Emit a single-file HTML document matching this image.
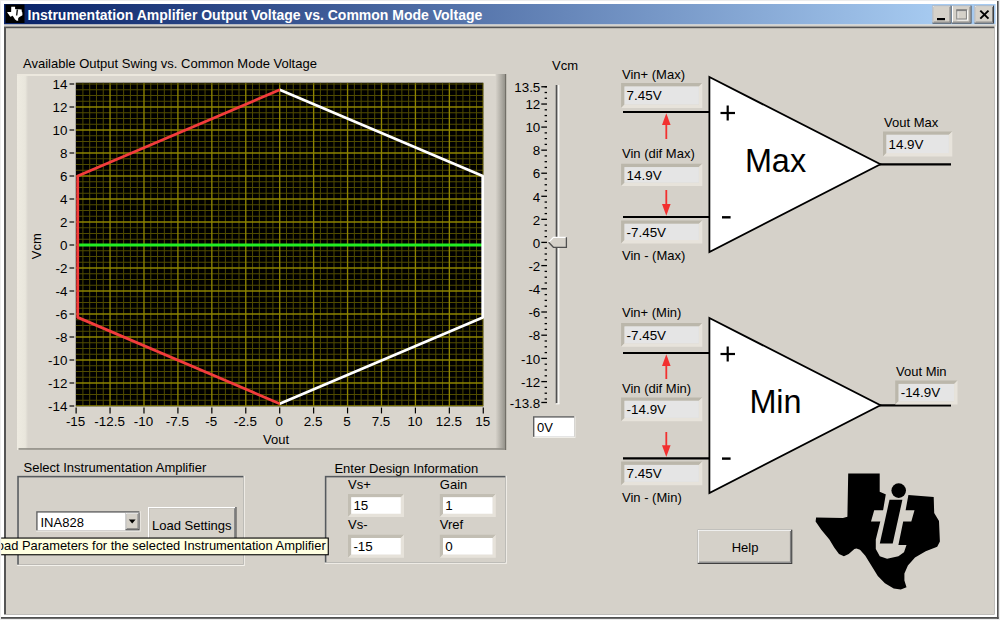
<!DOCTYPE html>
<html><head><meta charset="utf-8"><title>Instrumentation Amplifier Output Voltage vs. Common Mode Voltage</title>
<style>
html,body{margin:0;padding:0;width:1000px;height:620px;overflow:hidden;background:#ececec}
svg{display:block;font-family:'Liberation Sans', Arial, sans-serif}
</style></head><body>
<svg width="1000" height="620" viewBox="0 0 1000 620" font-family="Liberation Sans, Arial, sans-serif">
<rect x="0" y="0" width="1000" height="620" fill="#ececec" />
<rect x="1" y="1" width="996" height="616" fill="#ffffff" />
<rect x="997" y="1" width="1.6" height="618" fill="#505050" />
<rect x="1" y="617" width="997.6" height="1.8" fill="#505050" />
<defs><linearGradient id="tg" gradientUnits="userSpaceOnUse" x1="24" x2="935" y1="0" y2="0"><stop offset="0" stop-color="#0a246a"/><stop offset="1" stop-color="#a6caf0"/></linearGradient><linearGradient id="pr" x1="0" x2="1" y1="0" y2="0"><stop offset="0" stop-color="#d8d4cc"/><stop offset="1" stop-color="#8e8c84"/></linearGradient><linearGradient id="pl" x1="0" x2="1" y1="0" y2="0"><stop offset="0" stop-color="#eeebe1"/><stop offset="0.75" stop-color="#e9e6dc"/><stop offset="1" stop-color="#d9d5cd"/></linearGradient></defs>
<rect x="4" y="4" width="991.6" height="20.5" fill="url(#tg)" />
<rect x="4" y="24.5" width="991.6" height="2" fill="#d5d1c9" />
<rect x="4" y="26.5" width="990.5" height="588" fill="#555555" />
<rect x="6" y="28.2" width="988.5" height="586.3" fill="#d5d1c9" />
<rect x="5.5" y="4.5" width="19" height="18.5" fill="#000" />
<g transform="translate(7.2,6.6) scale(0.122) translate(-815,-473)">
<polygon fill="#fff" points="848.2,473.5 879.7,473.5 879.7,491.8 885.5,494.2 908.3,495.0 933.7,497.1 934.2,513.1 939,521 939.9,541.5 937.2,546.8 925.7,551.2 915,557.5 907.9,565.4 904.4,573.4 904.4,580.5 906.5,587.3 900.8,589.4 893.7,588.5 884.9,583.2 877.8,576.1 870.7,564.6 865.3,555.7 860,549.8 856.5,548.5 854.4,549 848.7,553.9 843.9,556.3 839,553.9 834.2,547.4 829.4,539.4 821.3,529.7 815.6,521.6 816.1,517.6 843,517.9 847.4,516.8"/>
<polygon fill="#222" points="892,497 905,497 898,545 886,545"/>
</g>
<text x="27.5" y="19.8" font-size="14" font-weight="bold" fill="#fff" text-anchor="start" >Instrumentation Amplifier Output Voltage vs. Common Mode Voltage</text>
<rect x="932.5" y="5.6" width="19" height="18" fill="#404040" />
<rect x="932.5" y="5.6" width="18" height="17" fill="#ffffff" />
<rect x="933.5" y="6.6" width="17" height="16" fill="#808080" />
<rect x="933.5" y="6.6" width="16" height="15" fill="#d5d1c9" />
<rect x="952" y="5.6" width="19.5" height="18" fill="#404040" />
<rect x="952" y="5.6" width="18.5" height="17" fill="#ffffff" />
<rect x="953" y="6.6" width="17.5" height="16" fill="#808080" />
<rect x="953" y="6.6" width="16.5" height="15" fill="#d5d1c9" />
<rect x="974.5" y="5.6" width="19.5" height="18" fill="#404040" />
<rect x="974.5" y="5.6" width="18.5" height="17" fill="#ffffff" />
<rect x="975.5" y="6.6" width="17.5" height="16" fill="#808080" />
<rect x="975.5" y="6.6" width="16.5" height="15" fill="#d5d1c9" />
<rect x="937" y="18" width="8" height="2.2" fill="#000" />
<rect x="957.8" y="10.8" width="9.6" height="9.2" fill="none" stroke="#fff" stroke-width="1"/>
<rect x="956.8" y="9.8" width="9.6" height="9.2" fill="none" stroke="#808080" stroke-width="1"/>
<line x1="956.4" y1="10.4" x2="966.8" y2="10.4" stroke="#808080" stroke-width="1.6" />
<line x1="980.3" y1="10.6" x2="988.5" y2="18.6" stroke="#000" stroke-width="2" />
<line x1="988.5" y1="10.6" x2="980.3" y2="18.6" stroke="#000" stroke-width="2" />
<rect x="17" y="74" width="489" height="376" fill="#d9d5cd" />
<rect x="17" y="74" width="11" height="376" fill="url(#pl)" />
<rect x="17" y="74" width="489" height="2" fill="#ece8de" />
<rect x="495.5" y="74" width="10.5" height="376" fill="url(#pr)" />
<rect x="18.5" y="448.1" width="487.5" height="1.7" fill="#94928a" />
<rect x="505.2" y="74" width="1" height="376" fill="#6a6860" />
<text x="23" y="67.6" font-size="13" font-weight="normal" fill="#000" text-anchor="start" >Available Output Swing vs. Common Mode Voltage</text>
<rect x="75.8" y="82.7" width="407.5" height="323.6" fill="#000" />
<clipPath id="pc"><rect x="75.8" y="82.7" width="407.5" height="323.6"/></clipPath>
<g clip-path="url(#pc)">
<line x1="82.91" y1="82.7" x2="82.91" y2="406.3" stroke="#504b00" stroke-width="1.0" />
<line x1="89.69" y1="82.7" x2="89.69" y2="406.3" stroke="#504b00" stroke-width="1.0" />
<line x1="96.48" y1="82.7" x2="96.48" y2="406.3" stroke="#504b00" stroke-width="1.0" />
<line x1="103.26" y1="82.7" x2="103.26" y2="406.3" stroke="#504b00" stroke-width="1.0" />
<line x1="116.84" y1="82.7" x2="116.84" y2="406.3" stroke="#504b00" stroke-width="1.0" />
<line x1="123.62" y1="82.7" x2="123.62" y2="406.3" stroke="#504b00" stroke-width="1.0" />
<line x1="130.41" y1="82.7" x2="130.41" y2="406.3" stroke="#504b00" stroke-width="1.0" />
<line x1="137.19" y1="82.7" x2="137.19" y2="406.3" stroke="#504b00" stroke-width="1.0" />
<line x1="150.77" y1="82.7" x2="150.77" y2="406.3" stroke="#504b00" stroke-width="1.0" />
<line x1="157.55" y1="82.7" x2="157.55" y2="406.3" stroke="#504b00" stroke-width="1.0" />
<line x1="164.34" y1="82.7" x2="164.34" y2="406.3" stroke="#504b00" stroke-width="1.0" />
<line x1="171.12" y1="82.7" x2="171.12" y2="406.3" stroke="#504b00" stroke-width="1.0" />
<line x1="184.70" y1="82.7" x2="184.70" y2="406.3" stroke="#504b00" stroke-width="1.0" />
<line x1="191.48" y1="82.7" x2="191.48" y2="406.3" stroke="#504b00" stroke-width="1.0" />
<line x1="198.27" y1="82.7" x2="198.27" y2="406.3" stroke="#504b00" stroke-width="1.0" />
<line x1="205.05" y1="82.7" x2="205.05" y2="406.3" stroke="#504b00" stroke-width="1.0" />
<line x1="218.63" y1="82.7" x2="218.63" y2="406.3" stroke="#504b00" stroke-width="1.0" />
<line x1="225.41" y1="82.7" x2="225.41" y2="406.3" stroke="#504b00" stroke-width="1.0" />
<line x1="232.20" y1="82.7" x2="232.20" y2="406.3" stroke="#504b00" stroke-width="1.0" />
<line x1="238.98" y1="82.7" x2="238.98" y2="406.3" stroke="#504b00" stroke-width="1.0" />
<line x1="252.56" y1="82.7" x2="252.56" y2="406.3" stroke="#504b00" stroke-width="1.0" />
<line x1="259.34" y1="82.7" x2="259.34" y2="406.3" stroke="#504b00" stroke-width="1.0" />
<line x1="266.13" y1="82.7" x2="266.13" y2="406.3" stroke="#504b00" stroke-width="1.0" />
<line x1="272.91" y1="82.7" x2="272.91" y2="406.3" stroke="#504b00" stroke-width="1.0" />
<line x1="286.49" y1="82.7" x2="286.49" y2="406.3" stroke="#504b00" stroke-width="1.0" />
<line x1="293.27" y1="82.7" x2="293.27" y2="406.3" stroke="#504b00" stroke-width="1.0" />
<line x1="300.06" y1="82.7" x2="300.06" y2="406.3" stroke="#504b00" stroke-width="1.0" />
<line x1="306.84" y1="82.7" x2="306.84" y2="406.3" stroke="#504b00" stroke-width="1.0" />
<line x1="320.42" y1="82.7" x2="320.42" y2="406.3" stroke="#504b00" stroke-width="1.0" />
<line x1="327.20" y1="82.7" x2="327.20" y2="406.3" stroke="#504b00" stroke-width="1.0" />
<line x1="333.99" y1="82.7" x2="333.99" y2="406.3" stroke="#504b00" stroke-width="1.0" />
<line x1="340.77" y1="82.7" x2="340.77" y2="406.3" stroke="#504b00" stroke-width="1.0" />
<line x1="354.35" y1="82.7" x2="354.35" y2="406.3" stroke="#504b00" stroke-width="1.0" />
<line x1="361.13" y1="82.7" x2="361.13" y2="406.3" stroke="#504b00" stroke-width="1.0" />
<line x1="367.92" y1="82.7" x2="367.92" y2="406.3" stroke="#504b00" stroke-width="1.0" />
<line x1="374.70" y1="82.7" x2="374.70" y2="406.3" stroke="#504b00" stroke-width="1.0" />
<line x1="388.28" y1="82.7" x2="388.28" y2="406.3" stroke="#504b00" stroke-width="1.0" />
<line x1="395.06" y1="82.7" x2="395.06" y2="406.3" stroke="#504b00" stroke-width="1.0" />
<line x1="401.85" y1="82.7" x2="401.85" y2="406.3" stroke="#504b00" stroke-width="1.0" />
<line x1="408.63" y1="82.7" x2="408.63" y2="406.3" stroke="#504b00" stroke-width="1.0" />
<line x1="422.21" y1="82.7" x2="422.21" y2="406.3" stroke="#504b00" stroke-width="1.0" />
<line x1="428.99" y1="82.7" x2="428.99" y2="406.3" stroke="#504b00" stroke-width="1.0" />
<line x1="435.78" y1="82.7" x2="435.78" y2="406.3" stroke="#504b00" stroke-width="1.0" />
<line x1="442.56" y1="82.7" x2="442.56" y2="406.3" stroke="#504b00" stroke-width="1.0" />
<line x1="456.14" y1="82.7" x2="456.14" y2="406.3" stroke="#504b00" stroke-width="1.0" />
<line x1="462.92" y1="82.7" x2="462.92" y2="406.3" stroke="#504b00" stroke-width="1.0" />
<line x1="469.71" y1="82.7" x2="469.71" y2="406.3" stroke="#504b00" stroke-width="1.0" />
<line x1="476.49" y1="82.7" x2="476.49" y2="406.3" stroke="#504b00" stroke-width="1.0" />
<line x1="75.8" y1="400.25" x2="483.3" y2="400.25" stroke="#504b00" stroke-width="1.0" />
<line x1="75.8" y1="394.50" x2="483.3" y2="394.50" stroke="#504b00" stroke-width="1.0" />
<line x1="75.8" y1="388.75" x2="483.3" y2="388.75" stroke="#504b00" stroke-width="1.0" />
<line x1="75.8" y1="377.25" x2="483.3" y2="377.25" stroke="#504b00" stroke-width="1.0" />
<line x1="75.8" y1="371.50" x2="483.3" y2="371.50" stroke="#504b00" stroke-width="1.0" />
<line x1="75.8" y1="365.75" x2="483.3" y2="365.75" stroke="#504b00" stroke-width="1.0" />
<line x1="75.8" y1="354.25" x2="483.3" y2="354.25" stroke="#504b00" stroke-width="1.0" />
<line x1="75.8" y1="348.50" x2="483.3" y2="348.50" stroke="#504b00" stroke-width="1.0" />
<line x1="75.8" y1="342.75" x2="483.3" y2="342.75" stroke="#504b00" stroke-width="1.0" />
<line x1="75.8" y1="331.25" x2="483.3" y2="331.25" stroke="#504b00" stroke-width="1.0" />
<line x1="75.8" y1="325.50" x2="483.3" y2="325.50" stroke="#504b00" stroke-width="1.0" />
<line x1="75.8" y1="319.75" x2="483.3" y2="319.75" stroke="#504b00" stroke-width="1.0" />
<line x1="75.8" y1="308.25" x2="483.3" y2="308.25" stroke="#504b00" stroke-width="1.0" />
<line x1="75.8" y1="302.50" x2="483.3" y2="302.50" stroke="#504b00" stroke-width="1.0" />
<line x1="75.8" y1="296.75" x2="483.3" y2="296.75" stroke="#504b00" stroke-width="1.0" />
<line x1="75.8" y1="285.25" x2="483.3" y2="285.25" stroke="#504b00" stroke-width="1.0" />
<line x1="75.8" y1="279.50" x2="483.3" y2="279.50" stroke="#504b00" stroke-width="1.0" />
<line x1="75.8" y1="273.75" x2="483.3" y2="273.75" stroke="#504b00" stroke-width="1.0" />
<line x1="75.8" y1="262.25" x2="483.3" y2="262.25" stroke="#504b00" stroke-width="1.0" />
<line x1="75.8" y1="256.50" x2="483.3" y2="256.50" stroke="#504b00" stroke-width="1.0" />
<line x1="75.8" y1="250.75" x2="483.3" y2="250.75" stroke="#504b00" stroke-width="1.0" />
<line x1="75.8" y1="239.25" x2="483.3" y2="239.25" stroke="#504b00" stroke-width="1.0" />
<line x1="75.8" y1="233.50" x2="483.3" y2="233.50" stroke="#504b00" stroke-width="1.0" />
<line x1="75.8" y1="227.75" x2="483.3" y2="227.75" stroke="#504b00" stroke-width="1.0" />
<line x1="75.8" y1="216.25" x2="483.3" y2="216.25" stroke="#504b00" stroke-width="1.0" />
<line x1="75.8" y1="210.50" x2="483.3" y2="210.50" stroke="#504b00" stroke-width="1.0" />
<line x1="75.8" y1="204.75" x2="483.3" y2="204.75" stroke="#504b00" stroke-width="1.0" />
<line x1="75.8" y1="193.25" x2="483.3" y2="193.25" stroke="#504b00" stroke-width="1.0" />
<line x1="75.8" y1="187.50" x2="483.3" y2="187.50" stroke="#504b00" stroke-width="1.0" />
<line x1="75.8" y1="181.75" x2="483.3" y2="181.75" stroke="#504b00" stroke-width="1.0" />
<line x1="75.8" y1="170.25" x2="483.3" y2="170.25" stroke="#504b00" stroke-width="1.0" />
<line x1="75.8" y1="164.50" x2="483.3" y2="164.50" stroke="#504b00" stroke-width="1.0" />
<line x1="75.8" y1="158.75" x2="483.3" y2="158.75" stroke="#504b00" stroke-width="1.0" />
<line x1="75.8" y1="147.25" x2="483.3" y2="147.25" stroke="#504b00" stroke-width="1.0" />
<line x1="75.8" y1="141.50" x2="483.3" y2="141.50" stroke="#504b00" stroke-width="1.0" />
<line x1="75.8" y1="135.75" x2="483.3" y2="135.75" stroke="#504b00" stroke-width="1.0" />
<line x1="75.8" y1="124.25" x2="483.3" y2="124.25" stroke="#504b00" stroke-width="1.0" />
<line x1="75.8" y1="118.50" x2="483.3" y2="118.50" stroke="#504b00" stroke-width="1.0" />
<line x1="75.8" y1="112.75" x2="483.3" y2="112.75" stroke="#504b00" stroke-width="1.0" />
<line x1="75.8" y1="101.25" x2="483.3" y2="101.25" stroke="#504b00" stroke-width="1.0" />
<line x1="75.8" y1="95.50" x2="483.3" y2="95.50" stroke="#504b00" stroke-width="1.0" />
<line x1="75.8" y1="89.75" x2="483.3" y2="89.75" stroke="#504b00" stroke-width="1.0" />
<line x1="110.05" y1="82.7" x2="110.05" y2="406.3" stroke="#8e8400" stroke-width="1.35" />
<line x1="143.98" y1="82.7" x2="143.98" y2="406.3" stroke="#8e8400" stroke-width="1.35" />
<line x1="177.91" y1="82.7" x2="177.91" y2="406.3" stroke="#8e8400" stroke-width="1.35" />
<line x1="211.84" y1="82.7" x2="211.84" y2="406.3" stroke="#8e8400" stroke-width="1.35" />
<line x1="245.77" y1="82.7" x2="245.77" y2="406.3" stroke="#8e8400" stroke-width="1.35" />
<line x1="279.70" y1="82.7" x2="279.70" y2="406.3" stroke="#8e8400" stroke-width="1.35" />
<line x1="313.63" y1="82.7" x2="313.63" y2="406.3" stroke="#8e8400" stroke-width="1.35" />
<line x1="347.56" y1="82.7" x2="347.56" y2="406.3" stroke="#8e8400" stroke-width="1.35" />
<line x1="381.49" y1="82.7" x2="381.49" y2="406.3" stroke="#8e8400" stroke-width="1.35" />
<line x1="415.42" y1="82.7" x2="415.42" y2="406.3" stroke="#8e8400" stroke-width="1.35" />
<line x1="449.35" y1="82.7" x2="449.35" y2="406.3" stroke="#8e8400" stroke-width="1.35" />
<line x1="483.28" y1="82.7" x2="483.28" y2="406.3" stroke="#8e8400" stroke-width="1.35" />
<line x1="75.8" y1="84.00" x2="483.3" y2="84.00" stroke="#504b00" stroke-width="1.0" />
<line x1="75.8" y1="406.00" x2="483.3" y2="406.00" stroke="#8e8400" stroke-width="1.35" />
<line x1="75.8" y1="383.00" x2="483.3" y2="383.00" stroke="#8e8400" stroke-width="1.35" />
<line x1="75.8" y1="360.00" x2="483.3" y2="360.00" stroke="#8e8400" stroke-width="1.35" />
<line x1="75.8" y1="337.00" x2="483.3" y2="337.00" stroke="#8e8400" stroke-width="1.35" />
<line x1="75.8" y1="314.00" x2="483.3" y2="314.00" stroke="#8e8400" stroke-width="1.35" />
<line x1="75.8" y1="291.00" x2="483.3" y2="291.00" stroke="#8e8400" stroke-width="1.35" />
<line x1="75.8" y1="268.00" x2="483.3" y2="268.00" stroke="#8e8400" stroke-width="1.35" />
<line x1="75.8" y1="245.00" x2="483.3" y2="245.00" stroke="#8e8400" stroke-width="1.35" />
<line x1="75.8" y1="222.00" x2="483.3" y2="222.00" stroke="#8e8400" stroke-width="1.35" />
<line x1="75.8" y1="199.00" x2="483.3" y2="199.00" stroke="#8e8400" stroke-width="1.35" />
<line x1="75.8" y1="176.00" x2="483.3" y2="176.00" stroke="#8e8400" stroke-width="1.35" />
<line x1="75.8" y1="153.00" x2="483.3" y2="153.00" stroke="#8e8400" stroke-width="1.35" />
<line x1="75.8" y1="130.00" x2="483.3" y2="130.00" stroke="#8e8400" stroke-width="1.35" />
<line x1="75.8" y1="107.00" x2="483.3" y2="107.00" stroke="#8e8400" stroke-width="1.35" />
</g>
<polyline fill="none" stroke="#22ee22" stroke-width="3" points="77.6,245.0 483.3,245.0"/>
<polyline fill="none" stroke="#ffffff" stroke-width="2.7" stroke-linejoin="round" points="279.7,89.8 482.7,176.0 482.7,317.4 279.7,403.7"/>
<polyline fill="none" stroke="#f23c3c" stroke-width="2.8" stroke-linejoin="round" points="279.7,89.8 77.7,176.0 77.7,317.4 279.7,403.7"/>
<line x1="69.5" y1="406.00" x2="74.2" y2="406.00" stroke="#000" stroke-width="1.15" />
<text x="67.4" y="411.1" font-size="13.4" font-weight="normal" fill="#000" text-anchor="end" >-14</text>
<line x1="69.5" y1="383.00" x2="74.2" y2="383.00" stroke="#000" stroke-width="1.15" />
<text x="67.4" y="388.1" font-size="13.4" font-weight="normal" fill="#000" text-anchor="end" >-12</text>
<line x1="69.5" y1="360.00" x2="74.2" y2="360.00" stroke="#000" stroke-width="1.15" />
<text x="67.4" y="365.1" font-size="13.4" font-weight="normal" fill="#000" text-anchor="end" >-10</text>
<line x1="69.5" y1="337.00" x2="74.2" y2="337.00" stroke="#000" stroke-width="1.15" />
<text x="67.4" y="342.1" font-size="13.4" font-weight="normal" fill="#000" text-anchor="end" >-8</text>
<line x1="69.5" y1="314.00" x2="74.2" y2="314.00" stroke="#000" stroke-width="1.15" />
<text x="67.4" y="319.1" font-size="13.4" font-weight="normal" fill="#000" text-anchor="end" >-6</text>
<line x1="69.5" y1="291.00" x2="74.2" y2="291.00" stroke="#000" stroke-width="1.15" />
<text x="67.4" y="296.1" font-size="13.4" font-weight="normal" fill="#000" text-anchor="end" >-4</text>
<line x1="69.5" y1="268.00" x2="74.2" y2="268.00" stroke="#000" stroke-width="1.15" />
<text x="67.4" y="273.1" font-size="13.4" font-weight="normal" fill="#000" text-anchor="end" >-2</text>
<line x1="69.5" y1="245.00" x2="74.2" y2="245.00" stroke="#000" stroke-width="1.15" />
<text x="67.4" y="250.1" font-size="13.4" font-weight="normal" fill="#000" text-anchor="end" >0</text>
<line x1="69.5" y1="222.00" x2="74.2" y2="222.00" stroke="#000" stroke-width="1.15" />
<text x="67.4" y="227.1" font-size="13.4" font-weight="normal" fill="#000" text-anchor="end" >2</text>
<line x1="69.5" y1="199.00" x2="74.2" y2="199.00" stroke="#000" stroke-width="1.15" />
<text x="67.4" y="204.1" font-size="13.4" font-weight="normal" fill="#000" text-anchor="end" >4</text>
<line x1="69.5" y1="176.00" x2="74.2" y2="176.00" stroke="#000" stroke-width="1.15" />
<text x="67.4" y="181.1" font-size="13.4" font-weight="normal" fill="#000" text-anchor="end" >6</text>
<line x1="69.5" y1="153.00" x2="74.2" y2="153.00" stroke="#000" stroke-width="1.15" />
<text x="67.4" y="158.1" font-size="13.4" font-weight="normal" fill="#000" text-anchor="end" >8</text>
<line x1="69.5" y1="130.00" x2="74.2" y2="130.00" stroke="#000" stroke-width="1.15" />
<text x="67.4" y="135.1" font-size="13.4" font-weight="normal" fill="#000" text-anchor="end" >10</text>
<line x1="69.5" y1="107.00" x2="74.2" y2="107.00" stroke="#000" stroke-width="1.15" />
<text x="67.4" y="112.1" font-size="13.4" font-weight="normal" fill="#000" text-anchor="end" >12</text>
<line x1="69.5" y1="84.00" x2="74.2" y2="84.00" stroke="#000" stroke-width="1.15" />
<text x="67.4" y="89.1" font-size="13.4" font-weight="normal" fill="#000" text-anchor="end" >14</text>
<line x1="76.12" y1="407.6" x2="76.12" y2="413.4" stroke="#000" stroke-width="1.2" />
<text x="75.6" y="426" font-size="13.4" font-weight="normal" fill="#000" text-anchor="middle" >-15</text>
<line x1="110.05" y1="407.6" x2="110.05" y2="413.4" stroke="#000" stroke-width="1.2" />
<text x="109.6" y="426" font-size="13.4" font-weight="normal" fill="#000" text-anchor="middle" >-12.5</text>
<line x1="143.98" y1="407.6" x2="143.98" y2="413.4" stroke="#000" stroke-width="1.2" />
<text x="143.5" y="426" font-size="13.4" font-weight="normal" fill="#000" text-anchor="middle" >-10</text>
<line x1="177.91" y1="407.6" x2="177.91" y2="413.4" stroke="#000" stroke-width="1.2" />
<text x="177.4" y="426" font-size="13.4" font-weight="normal" fill="#000" text-anchor="middle" >-7.5</text>
<line x1="211.84" y1="407.6" x2="211.84" y2="413.4" stroke="#000" stroke-width="1.2" />
<text x="211.3" y="426" font-size="13.4" font-weight="normal" fill="#000" text-anchor="middle" >-5</text>
<line x1="245.77" y1="407.6" x2="245.77" y2="413.4" stroke="#000" stroke-width="1.2" />
<text x="245.3" y="426" font-size="13.4" font-weight="normal" fill="#000" text-anchor="middle" >-2.5</text>
<line x1="279.70" y1="407.6" x2="279.70" y2="413.4" stroke="#000" stroke-width="1.2" />
<text x="279.2" y="426" font-size="13.4" font-weight="normal" fill="#000" text-anchor="middle" >0</text>
<line x1="313.63" y1="407.6" x2="313.63" y2="413.4" stroke="#000" stroke-width="1.2" />
<text x="313.1" y="426" font-size="13.4" font-weight="normal" fill="#000" text-anchor="middle" >2.5</text>
<line x1="347.56" y1="407.6" x2="347.56" y2="413.4" stroke="#000" stroke-width="1.2" />
<text x="347.1" y="426" font-size="13.4" font-weight="normal" fill="#000" text-anchor="middle" >5</text>
<line x1="381.49" y1="407.6" x2="381.49" y2="413.4" stroke="#000" stroke-width="1.2" />
<text x="381.0" y="426" font-size="13.4" font-weight="normal" fill="#000" text-anchor="middle" >7.5</text>
<line x1="415.42" y1="407.6" x2="415.42" y2="413.4" stroke="#000" stroke-width="1.2" />
<text x="414.9" y="426" font-size="13.4" font-weight="normal" fill="#000" text-anchor="middle" >10</text>
<line x1="449.35" y1="407.6" x2="449.35" y2="413.4" stroke="#000" stroke-width="1.2" />
<text x="448.8" y="426" font-size="13.4" font-weight="normal" fill="#000" text-anchor="middle" >12.5</text>
<line x1="483.28" y1="407.6" x2="483.28" y2="413.4" stroke="#000" stroke-width="1.2" />
<text x="482.8" y="426" font-size="13.4" font-weight="normal" fill="#000" text-anchor="middle" >15</text>
<text x="276" y="444" font-size="13" font-weight="normal" fill="#000" text-anchor="middle" >Vout</text>
<text transform="translate(40.8,246.2) rotate(-90)" font-size="13" text-anchor="middle">Vcm</text>
<text x="565" y="69.5" font-size="13" font-weight="normal" fill="#000" text-anchor="middle" >Vcm</text>
<rect x="555.7" y="85" width="1.9" height="318.5" fill="#505050" />
<rect x="557.6" y="85" width="1.8" height="319" fill="#f8f8f4" />
<rect x="555.7" y="403.2" width="3.7" height="1.2" fill="#f8f8f4" />
<line x1="544.6" y1="86.75" x2="547" y2="86.75" stroke="#000" stroke-width="1.3" />
<line x1="544.6" y1="92.51" x2="547" y2="92.51" stroke="#000" stroke-width="1.3" />
<line x1="544.6" y1="98.28" x2="547" y2="98.28" stroke="#000" stroke-width="1.3" />
<line x1="541.3" y1="104.04" x2="547" y2="104.04" stroke="#000" stroke-width="1.3" />
<text x="540.3" y="109.2" font-size="13.4" font-weight="normal" fill="#000" text-anchor="end" >12</text>
<line x1="544.6" y1="109.81" x2="547" y2="109.81" stroke="#000" stroke-width="1.3" />
<line x1="544.6" y1="115.57" x2="547" y2="115.57" stroke="#000" stroke-width="1.3" />
<line x1="544.6" y1="121.34" x2="547" y2="121.34" stroke="#000" stroke-width="1.3" />
<line x1="541.3" y1="127.10" x2="547" y2="127.10" stroke="#000" stroke-width="1.3" />
<text x="540.3" y="132.3" font-size="13.4" font-weight="normal" fill="#000" text-anchor="end" >10</text>
<line x1="544.6" y1="132.87" x2="547" y2="132.87" stroke="#000" stroke-width="1.3" />
<line x1="544.6" y1="138.63" x2="547" y2="138.63" stroke="#000" stroke-width="1.3" />
<line x1="544.6" y1="144.40" x2="547" y2="144.40" stroke="#000" stroke-width="1.3" />
<line x1="541.3" y1="150.16" x2="547" y2="150.16" stroke="#000" stroke-width="1.3" />
<text x="540.3" y="155.4" font-size="13.4" font-weight="normal" fill="#000" text-anchor="end" >8</text>
<line x1="544.6" y1="155.93" x2="547" y2="155.93" stroke="#000" stroke-width="1.3" />
<line x1="544.6" y1="161.69" x2="547" y2="161.69" stroke="#000" stroke-width="1.3" />
<line x1="544.6" y1="167.46" x2="547" y2="167.46" stroke="#000" stroke-width="1.3" />
<line x1="541.3" y1="173.22" x2="547" y2="173.22" stroke="#000" stroke-width="1.3" />
<text x="540.3" y="178.4" font-size="13.4" font-weight="normal" fill="#000" text-anchor="end" >6</text>
<line x1="544.6" y1="178.99" x2="547" y2="178.99" stroke="#000" stroke-width="1.3" />
<line x1="544.6" y1="184.75" x2="547" y2="184.75" stroke="#000" stroke-width="1.3" />
<line x1="544.6" y1="190.52" x2="547" y2="190.52" stroke="#000" stroke-width="1.3" />
<line x1="541.3" y1="196.28" x2="547" y2="196.28" stroke="#000" stroke-width="1.3" />
<text x="540.3" y="201.5" font-size="13.4" font-weight="normal" fill="#000" text-anchor="end" >4</text>
<line x1="544.6" y1="202.05" x2="547" y2="202.05" stroke="#000" stroke-width="1.3" />
<line x1="544.6" y1="207.81" x2="547" y2="207.81" stroke="#000" stroke-width="1.3" />
<line x1="544.6" y1="213.58" x2="547" y2="213.58" stroke="#000" stroke-width="1.3" />
<line x1="541.3" y1="219.34" x2="547" y2="219.34" stroke="#000" stroke-width="1.3" />
<text x="540.3" y="224.5" font-size="13.4" font-weight="normal" fill="#000" text-anchor="end" >2</text>
<line x1="544.6" y1="225.11" x2="547" y2="225.11" stroke="#000" stroke-width="1.3" />
<line x1="544.6" y1="230.87" x2="547" y2="230.87" stroke="#000" stroke-width="1.3" />
<line x1="544.6" y1="236.64" x2="547" y2="236.64" stroke="#000" stroke-width="1.3" />
<line x1="541.3" y1="242.40" x2="547" y2="242.40" stroke="#000" stroke-width="1.3" />
<text x="540.3" y="247.6" font-size="13.4" font-weight="normal" fill="#000" text-anchor="end" >0</text>
<line x1="544.6" y1="248.20" x2="547" y2="248.20" stroke="#000" stroke-width="1.3" />
<line x1="544.6" y1="254.00" x2="547" y2="254.00" stroke="#000" stroke-width="1.3" />
<line x1="544.6" y1="259.80" x2="547" y2="259.80" stroke="#000" stroke-width="1.3" />
<line x1="541.3" y1="265.60" x2="547" y2="265.60" stroke="#000" stroke-width="1.3" />
<text x="540.3" y="270.8" font-size="13.4" font-weight="normal" fill="#000" text-anchor="end" >-2</text>
<line x1="544.6" y1="271.40" x2="547" y2="271.40" stroke="#000" stroke-width="1.3" />
<line x1="544.6" y1="277.20" x2="547" y2="277.20" stroke="#000" stroke-width="1.3" />
<line x1="544.6" y1="283.00" x2="547" y2="283.00" stroke="#000" stroke-width="1.3" />
<line x1="541.3" y1="288.80" x2="547" y2="288.80" stroke="#000" stroke-width="1.3" />
<text x="540.3" y="294.0" font-size="13.4" font-weight="normal" fill="#000" text-anchor="end" >-4</text>
<line x1="544.6" y1="294.60" x2="547" y2="294.60" stroke="#000" stroke-width="1.3" />
<line x1="544.6" y1="300.40" x2="547" y2="300.40" stroke="#000" stroke-width="1.3" />
<line x1="544.6" y1="306.20" x2="547" y2="306.20" stroke="#000" stroke-width="1.3" />
<line x1="541.3" y1="312.00" x2="547" y2="312.00" stroke="#000" stroke-width="1.3" />
<text x="540.3" y="317.2" font-size="13.4" font-weight="normal" fill="#000" text-anchor="end" >-6</text>
<line x1="544.6" y1="317.80" x2="547" y2="317.80" stroke="#000" stroke-width="1.3" />
<line x1="544.6" y1="323.60" x2="547" y2="323.60" stroke="#000" stroke-width="1.3" />
<line x1="544.6" y1="329.40" x2="547" y2="329.40" stroke="#000" stroke-width="1.3" />
<line x1="541.3" y1="335.20" x2="547" y2="335.20" stroke="#000" stroke-width="1.3" />
<text x="540.3" y="340.4" font-size="13.4" font-weight="normal" fill="#000" text-anchor="end" >-8</text>
<line x1="544.6" y1="341.00" x2="547" y2="341.00" stroke="#000" stroke-width="1.3" />
<line x1="544.6" y1="346.80" x2="547" y2="346.80" stroke="#000" stroke-width="1.3" />
<line x1="544.6" y1="352.60" x2="547" y2="352.60" stroke="#000" stroke-width="1.3" />
<line x1="541.3" y1="358.40" x2="547" y2="358.40" stroke="#000" stroke-width="1.3" />
<text x="540.3" y="363.6" font-size="13.4" font-weight="normal" fill="#000" text-anchor="end" >-10</text>
<line x1="544.6" y1="364.20" x2="547" y2="364.20" stroke="#000" stroke-width="1.3" />
<line x1="544.6" y1="370.00" x2="547" y2="370.00" stroke="#000" stroke-width="1.3" />
<line x1="544.6" y1="375.80" x2="547" y2="375.80" stroke="#000" stroke-width="1.3" />
<line x1="541.3" y1="381.60" x2="547" y2="381.60" stroke="#000" stroke-width="1.3" />
<text x="540.3" y="386.8" font-size="13.4" font-weight="normal" fill="#000" text-anchor="end" >-12</text>
<line x1="544.6" y1="387.40" x2="547" y2="387.40" stroke="#000" stroke-width="1.3" />
<line x1="544.6" y1="393.20" x2="547" y2="393.20" stroke="#000" stroke-width="1.3" />
<line x1="544.6" y1="399.00" x2="547" y2="399.00" stroke="#000" stroke-width="1.3" />
<line x1="541.3" y1="86.75" x2="547" y2="86.75" stroke="#000" stroke-width="1.3" />
<text x="540.3" y="91.9" font-size="13.4" font-weight="normal" fill="#000" text-anchor="end" >13.5</text>
<line x1="541.3" y1="402.48" x2="547" y2="402.48" stroke="#000" stroke-width="1.3" />
<text x="540.3" y="407.7" font-size="13.4" font-weight="normal" fill="#000" text-anchor="end" >-13.8</text>
<polygon points="548.4,242.3 553.4,237.10000000000002 566.6,237.10000000000002 566.6,247.5 553.4,247.5" fill="#d5d1c9"/>
<polyline points="548.6,242.3 553.4,237.3 566.4,237.3" fill="none" stroke="#ffffff" stroke-width="1.2"/>
<polyline points="548.6,242.3 553.4,247.3 566.4,247.3 566.4,237.3" fill="none" stroke="#505050" stroke-width="1.3"/>
<rect x="533" y="416.2" width="42.5" height="21.8" fill="#f0eee8" />
<rect x="533" y="416.2" width="41.3" height="20.6" fill="#606060" />
<rect x="534.4" y="417.59999999999997" width="39.9" height="19.2" fill="#fff" />
<text x="537" y="432.2" font-size="13" font-weight="normal" fill="#000" text-anchor="start" >0V</text>
<polygon points="709.4,77 880.4,164.3 709.4,252" fill="#fff" stroke="#000" stroke-width="1.8" stroke-linejoin="miter"/>
<line x1="623" y1="112" x2="709" y2="112" stroke="#000" stroke-width="2.2" />
<line x1="623" y1="217" x2="709" y2="217" stroke="#000" stroke-width="2.2" />
<line x1="879.4" y1="164.3" x2="951" y2="164.3" stroke="#000" stroke-width="2.2" />
<line x1="720.5" y1="113" x2="735" y2="113" stroke="#000" stroke-width="2.2" />
<line x1="727.7" y1="105.5" x2="727.7" y2="120.5" stroke="#000" stroke-width="2.2" />
<line x1="722" y1="217.3" x2="730.6" y2="217.3" stroke="#000" stroke-width="2.4" />
<line x1="666.3" y1="123" x2="666.3" y2="139" stroke="#f23030" stroke-width="1.8" />
<polygon points="666.3,113.3 662.0,125 670.5999999999999,125" fill="#f23030"/>
<line x1="666.3" y1="190" x2="666.3" y2="206" stroke="#f23030" stroke-width="1.8" />
<polygon points="666.3,215.8 662.0,204 670.5999999999999,204" fill="#f23030"/>
<text x="622" y="78.5" font-size="13" font-weight="normal" fill="#000" text-anchor="start" >Vin+ (Max)</text>
<polygon fill="#bbb7ab" points="621.1,83.10000000000001 702.3,83.10000000000001 698.9,86.50000000000001 624.5,86.50000000000001 624.5,104.5 621.1,107.9"/>
<polygon fill="#e7e3db" points="702.3,107.9 621.1,107.9 624.5,104.5 698.9,104.5 698.9,86.50000000000001 702.3,83.10000000000001"/>
<rect x="624.5" y="86.50000000000001" width="74.39999999999999" height="17.99999999999999" fill="#e5e5e5" />
<text x="626.6" y="100.3" font-size="13.4" font-weight="normal" fill="#000" text-anchor="start" >7.45V</text>
<text x="622" y="158.4" font-size="13" font-weight="normal" fill="#000" text-anchor="start" >Vin (dif Max)</text>
<polygon fill="#bbb7ab" points="621.1,163.7 702.3,163.7 698.9,167.1 624.5,167.1 624.5,182.7 621.1,186.1"/>
<polygon fill="#e7e3db" points="702.3,186.1 621.1,186.1 624.5,182.7 698.9,182.7 698.9,167.1 702.3,163.7"/>
<rect x="624.5" y="167.1" width="74.39999999999999" height="15.600000000000012" fill="#e5e5e5" />
<text x="626.6" y="179.70000000000002" font-size="13.4" font-weight="normal" fill="#000" text-anchor="start" >14.9V</text>
<polygon fill="#bbb7ab" points="621.1,220.39999999999998 702.3,220.39999999999998 698.9,223.79999999999998 624.5,223.79999999999998 624.5,240.09999999999997 621.1,243.49999999999997"/>
<polygon fill="#e7e3db" points="702.3,243.49999999999997 621.1,243.49999999999997 624.5,240.09999999999997 698.9,240.09999999999997 698.9,223.79999999999998 702.3,220.39999999999998"/>
<rect x="624.5" y="223.79999999999998" width="74.39999999999999" height="16.3" fill="#e5e5e5" />
<text x="626.6" y="236.75" font-size="13.4" font-weight="normal" fill="#000" text-anchor="start" >-7.45V</text>
<text x="622" y="260.2" font-size="13" font-weight="normal" fill="#000" text-anchor="start" >Vin - (Max)</text>
<text x="775.5" y="171.5" font-size="32.4" font-weight="normal" fill="#000" text-anchor="middle" >Max</text>
<text x="884" y="126.8" font-size="13" font-weight="normal" fill="#000" text-anchor="start" >Vout Max</text>
<polygon fill="#bbb7ab" points="883.0,131.39999999999998 952.3,131.39999999999998 948.9,134.79999999999998 886.4,134.79999999999998 886.4,153.09999999999997 883.0,156.49999999999997"/>
<polygon fill="#e7e3db" points="952.3,156.49999999999997 883.0,156.49999999999997 886.4,153.09999999999997 948.9,153.09999999999997 948.9,134.79999999999998 952.3,131.39999999999998"/>
<rect x="886.4" y="134.79999999999998" width="62.5" height="18.3" fill="#e5e5e5" />
<text x="888.5" y="148.75" font-size="13.4" font-weight="normal" fill="#000" text-anchor="start" >14.9V</text>
<polygon points="709.4,318 880.4,405.3 709.4,493" fill="#fff" stroke="#000" stroke-width="1.8" stroke-linejoin="miter"/>
<line x1="623" y1="353" x2="709" y2="353" stroke="#000" stroke-width="2.2" />
<line x1="623" y1="458.3" x2="709" y2="458.3" stroke="#000" stroke-width="2.2" />
<line x1="879.4" y1="405.3" x2="951" y2="405.3" stroke="#000" stroke-width="2.2" />
<line x1="720.5" y1="354" x2="735" y2="354" stroke="#000" stroke-width="2.2" />
<line x1="727.7" y1="346.5" x2="727.7" y2="361.5" stroke="#000" stroke-width="2.2" />
<line x1="722" y1="458.6" x2="730.6" y2="458.6" stroke="#000" stroke-width="2.4" />
<line x1="666.3" y1="364" x2="666.3" y2="379" stroke="#f23030" stroke-width="1.8" />
<polygon points="666.3,354.3 662.0,366 670.5999999999999,366" fill="#f23030"/>
<line x1="666.3" y1="432" x2="666.3" y2="447.3" stroke="#f23030" stroke-width="1.8" />
<polygon points="666.3,457.1 662.0,445.3 670.5999999999999,445.3" fill="#f23030"/>
<text x="622" y="317.4" font-size="13" font-weight="normal" fill="#000" text-anchor="start" >Vin+ (Min)</text>
<polygon fill="#bbb7ab" points="621.1,323.0 702.3,323.0 698.9,326.4 624.5,326.4 624.5,343.3 621.1,346.7"/>
<polygon fill="#e7e3db" points="702.3,346.7 621.1,346.7 624.5,343.3 698.9,343.3 698.9,326.4 702.3,323.0"/>
<rect x="624.5" y="326.4" width="74.39999999999999" height="16.899999999999967" fill="#e5e5e5" />
<text x="626.6" y="339.65000000000003" font-size="13.4" font-weight="normal" fill="#000" text-anchor="start" >-7.45V</text>
<text x="622" y="393" font-size="13" font-weight="normal" fill="#000" text-anchor="start" >Vin (dif Min)</text>
<polygon fill="#bbb7ab" points="621.1,397.4 702.3,397.4 698.9,400.79999999999995 624.5,400.79999999999995 624.5,417.90000000000003 621.1,421.3"/>
<polygon fill="#e7e3db" points="702.3,421.3 621.1,421.3 624.5,417.90000000000003 698.9,417.90000000000003 698.9,400.79999999999995 702.3,397.4"/>
<rect x="624.5" y="400.79999999999995" width="74.39999999999999" height="17.100000000000012" fill="#e5e5e5" />
<text x="626.6" y="414.15000000000003" font-size="13.4" font-weight="normal" fill="#000" text-anchor="start" >-14.9V</text>
<polygon fill="#bbb7ab" points="621.1,461.5 702.3,461.5 698.9,464.9 624.5,464.9 624.5,481.90000000000003 621.1,485.3"/>
<polygon fill="#e7e3db" points="702.3,485.3 621.1,485.3 624.5,481.90000000000003 698.9,481.90000000000003 698.9,464.9 702.3,461.5"/>
<rect x="624.5" y="464.9" width="74.39999999999999" height="16.99999999999999" fill="#e5e5e5" />
<text x="626.6" y="478.2" font-size="13.4" font-weight="normal" fill="#000" text-anchor="start" >7.45V</text>
<text x="622" y="501.7" font-size="13" font-weight="normal" fill="#000" text-anchor="start" >Vin - (Min)</text>
<text x="775.5" y="413" font-size="32.4" font-weight="normal" fill="#000" text-anchor="middle" >Min</text>
<text x="896" y="375.9" font-size="13" font-weight="normal" fill="#000" text-anchor="start" >Vout Min</text>
<polygon fill="#bbb7ab" points="895.2,380.5 957.5,380.5 954.1,383.9 898.6,383.9 898.6,401.20000000000005 895.2,404.6"/>
<polygon fill="#e7e3db" points="957.5,404.6 895.2,404.6 898.6,401.20000000000005 954.1,401.20000000000005 954.1,383.9 957.5,380.5"/>
<rect x="898.6" y="383.9" width="55.50000000000001" height="17.3" fill="#e5e5e5" />
<text x="900.7" y="397.35" font-size="13.4" font-weight="normal" fill="#000" text-anchor="start" >-14.9V</text>
<rect x="17.2" y="475.8" width="227.6" height="90.2" fill="#f4f2ec" />
<rect x="17.2" y="475.8" width="226.29999999999998" height="88.9" fill="#565a5e" />
<rect x="18.8" y="477.40000000000003" width="224.7" height="87.3" fill="#d5d1c9" />
<text x="23.5" y="472.1" font-size="13" font-weight="normal" fill="#000" text-anchor="start" >Select Instrumentation Amplifier</text>
<rect x="324.8" y="475.8" width="182" height="88" fill="#f4f2ec" />
<rect x="324.8" y="475.8" width="180.7" height="86.7" fill="#565a5e" />
<rect x="326.40000000000003" y="477.40000000000003" width="179.1" height="85.1" fill="#d5d1c9" />
<text x="334.4" y="472.6" font-size="13" font-weight="normal" fill="#000" text-anchor="start" >Enter Design Information</text>
<rect x="36.2" y="511.2" width="104.5" height="20.4" fill="#f0eee8" />
<rect x="36.2" y="511.2" width="103.3" height="19.2" fill="#606060" />
<rect x="37.6" y="512.6" width="101.9" height="17.799999999999997" fill="#fff" />
<text x="40.5" y="526.8" font-size="13" font-weight="normal" fill="#000" text-anchor="start" >INA828</text>
<rect x="125.5" y="512.8" width="14" height="17.4" fill="#404040" />
<rect x="125.5" y="512.8" width="13" height="16.4" fill="#ffffff" />
<rect x="126.5" y="513.8" width="12" height="15.4" fill="#808080" />
<rect x="126.5" y="513.8" width="11" height="14.4" fill="#d5d1c9" />
<polygon points="128.8,519.5 135.6,519.5 132.2,523.4" fill="#000"/>
<rect x="148" y="507" width="88.5" height="34" fill="#404040" />
<rect x="148" y="507" width="87.3" height="32.8" fill="#ffffff" />
<rect x="149.2" y="508.2" width="86.1" height="31.6" fill="#808080" />
<rect x="149.2" y="508.2" width="84.9" height="30.4" fill="#d5d1c9" />
<text x="152" y="529.5" font-size="13" font-weight="normal" fill="#000" text-anchor="start" >Load Settings</text>
<text x="348" y="488.6" font-size="13" font-weight="normal" fill="#000" text-anchor="start" >Vs+</text>
<polygon fill="#c2beb3" points="348,494 404,494 400.8,497.2 351.2,497.2 351.2,513.8 348,517"/>
<polygon fill="#e6e2da" points="404,517 348,517 351.2,513.8 400.8,513.8 400.8,497.2 404,494"/>
<rect x="351.2" y="497.2" width="49.6" height="16.6" fill="#ffffff" />
<text x="353.4" y="510.4" font-size="13.4" font-weight="normal" fill="#000" text-anchor="start" >15</text>
<text x="439.8" y="488.6" font-size="13" font-weight="normal" fill="#000" text-anchor="start" >Gain</text>
<polygon fill="#c2beb3" points="439.8,494 495.8,494 492.6,497.2 443.0,497.2 443.0,513.8 439.8,517"/>
<polygon fill="#e6e2da" points="495.8,517 439.8,517 443.0,513.8 492.6,513.8 492.6,497.2 495.8,494"/>
<rect x="443.0" y="497.2" width="49.6" height="16.6" fill="#ffffff" />
<text x="445.2" y="510.4" font-size="13.4" font-weight="normal" fill="#000" text-anchor="start" >1</text>
<text x="348" y="529" font-size="13" font-weight="normal" fill="#000" text-anchor="start" >Vs-</text>
<polygon fill="#c2beb3" points="348,534.8 404,534.8 400.8,538.0 351.2,538.0 351.2,554.5999999999999 348,557.8"/>
<polygon fill="#e6e2da" points="404,557.8 348,557.8 351.2,554.5999999999999 400.8,554.5999999999999 400.8,538.0 404,534.8"/>
<rect x="351.2" y="538.0" width="49.6" height="16.6" fill="#ffffff" />
<text x="353.4" y="551.1999999999999" font-size="13.4" font-weight="normal" fill="#000" text-anchor="start" >-15</text>
<text x="439.8" y="529" font-size="13" font-weight="normal" fill="#000" text-anchor="start" >Vref</text>
<polygon fill="#c2beb3" points="439.8,534.8 495.8,534.8 492.6,538.0 443.0,538.0 443.0,554.5999999999999 439.8,557.8"/>
<polygon fill="#e6e2da" points="495.8,557.8 439.8,557.8 443.0,554.5999999999999 492.6,554.5999999999999 492.6,538.0 495.8,534.8"/>
<rect x="443.0" y="538.0" width="49.6" height="16.6" fill="#ffffff" />
<text x="445.2" y="551.1999999999999" font-size="13.4" font-weight="normal" fill="#000" text-anchor="start" >0</text>
<rect x="697.7" y="529.7" width="94.6" height="34.3" fill="#404040" />
<rect x="697.7" y="529.7" width="93.39999999999999" height="33.099999999999994" fill="#ffffff" />
<rect x="698.9000000000001" y="530.9000000000001" width="92.19999999999999" height="31.9" fill="#808080" />
<rect x="698.9000000000001" y="530.9000000000001" width="91.0" height="30.699999999999996" fill="#d5d1c9" />
<text x="745" y="552.3" font-size="13" font-weight="normal" fill="#000" text-anchor="middle" >Help</text>
<rect x="0" y="537.5" width="328.8" height="17.8" fill="#000" />
<rect x="0" y="538.6" width="327.7" height="15.6" fill="#ffffe1" />
<clipPath id="tc"><rect x="1" y="537" width="328" height="19"/></clipPath>
<text x="325.7" y="549.8" font-size="12.9" font-weight="normal" fill="#000" text-anchor="end" clip-path="url(#tc)">Load Parameters for the selected Instrumentation Amplifier</text>
<rect x="0" y="537" width="1.2" height="19" fill="#ececec" />
<polygon fill="#000" points="848.2,473.5 879.7,473.5 879.7,491.8 885.5,494.2 908.3,495.0 933.7,497.1 934.2,513.1 939,521 939.9,541.5 937.2,546.8 925.7,551.2 915,557.5 907.9,565.4 904.4,573.4 904.4,580.5 906.5,587.3 900.8,589.4 893.7,588.5 884.9,583.2 877.8,576.1 870.7,564.6 865.3,555.7 860,549.8 856.5,548.5 854.4,549 848.7,553.9 843.9,556.3 839,553.9 834.2,547.4 829.4,539.4 821.3,529.7 815.6,521.6 816.1,517.6 843,517.9 847.4,516.8"/>
<polygon fill="#d5d1c9" points="885.8,489.4 885.8,494.2 883.1,510.3 874.2,510.3 871.0,521.6 880.3,521.6 875.8,539.4 875.8,549.0 879.8,556.3 887.1,558.7 898.4,556.3 904.0,552.3 906.5,545.0 898.4,545.0 903.2,521.6 911.3,521.6 914.5,510.3 905.6,510.3 908.4,495.0 908.4,489.4"/>
<polygon fill="#000" points="889.5,499.8 902.4,499.8 892.7,543.4 879.8,543.4"/>
<circle cx="898.7" cy="490.6" r="7.3" fill="#000"/>
</svg>
</body></html>
